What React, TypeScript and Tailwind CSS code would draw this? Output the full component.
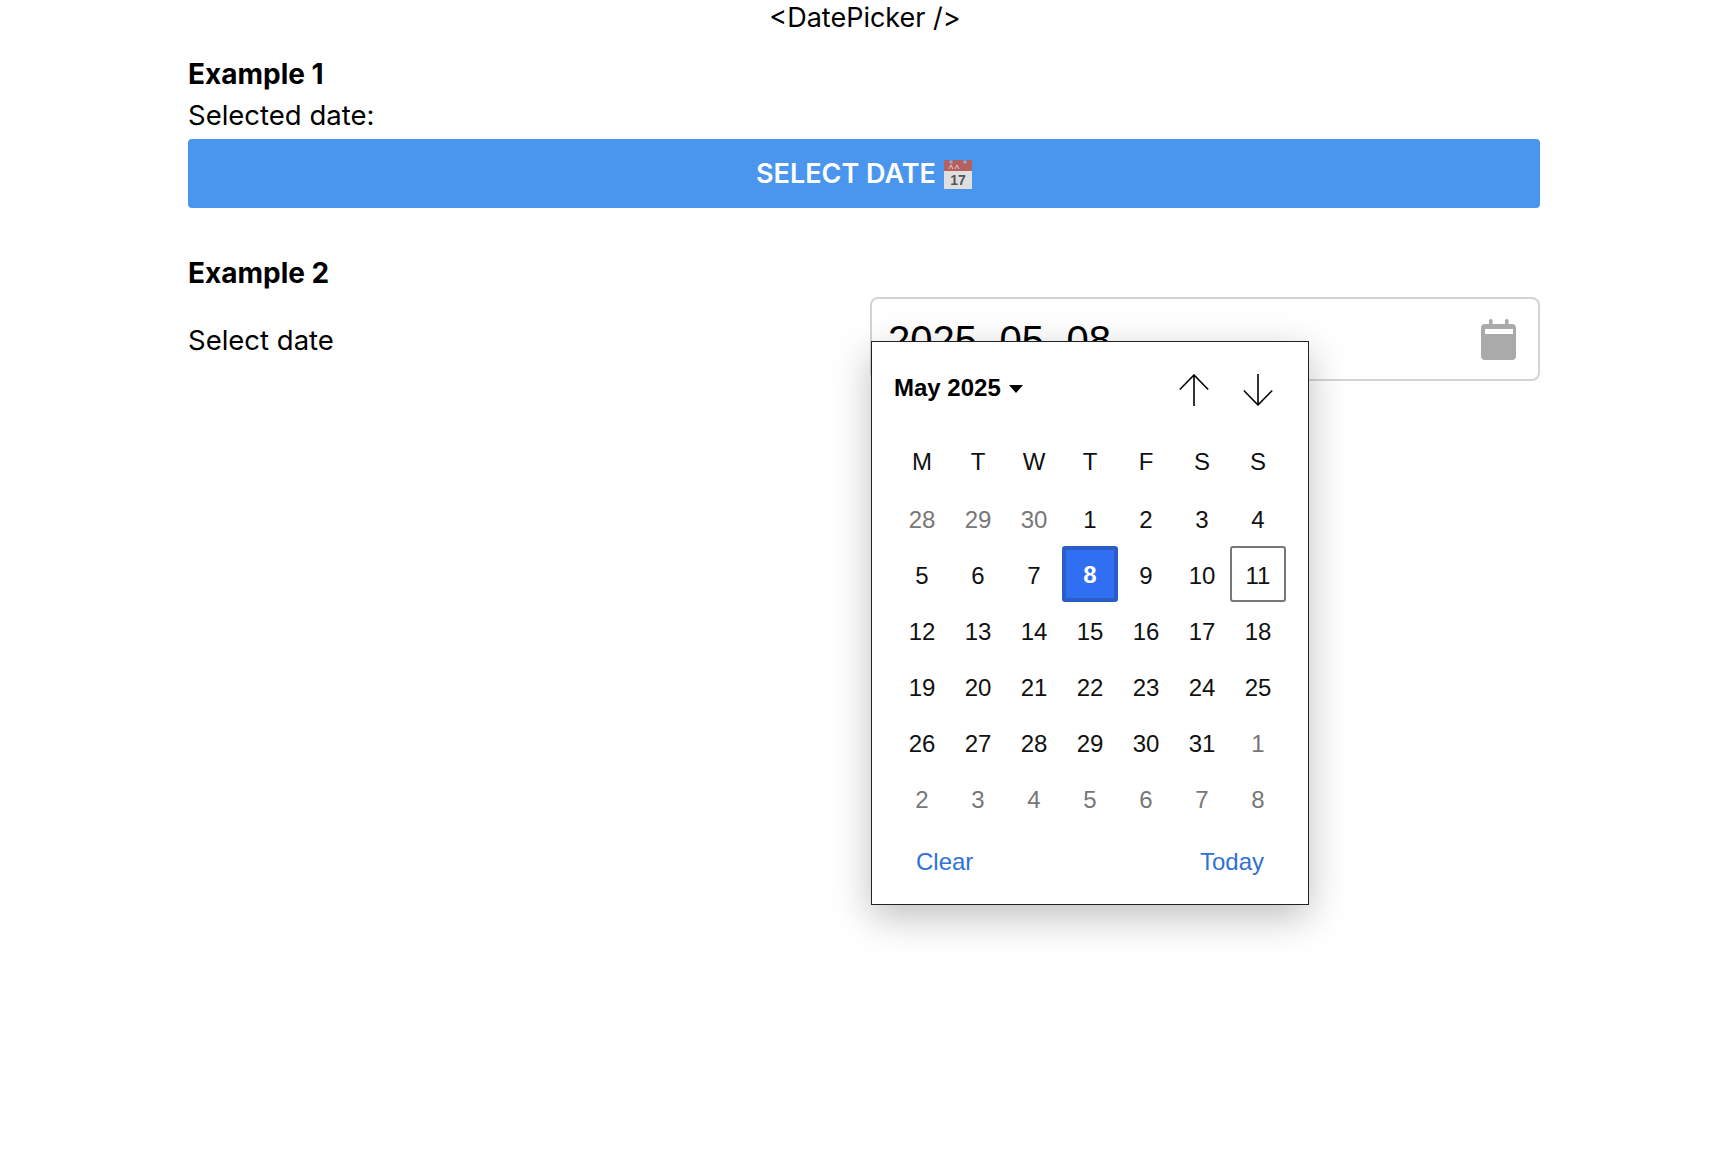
const weekdays = ["M", "T", "W", "T", "F", "S", "S"];

type Day = { label: number; muted?: boolean; selected?: boolean; today?: boolean };

const days: Day[] = [
  { label: 28, muted: true },
  { label: 29, muted: true },
  { label: 30, muted: true },
  ...Array.from({ length: 31 }, (_, i) => ({
    label: i + 1,
    selected: i + 1 === 8,
    today: i + 1 === 11,
  })),
  ...Array.from({ length: 8 }, (_, i) => ({ label: i + 1, muted: true })),
];

const CalendarEmoji = () => (
  <svg width="28" height="29" viewBox="0 0 28 29" className="inline-block ml-[8px] -mt-[2px] align-middle">
    <rect width="28" height="29" fill="#dfdfdf" />
    <rect width="28" height="11" fill="#b4605e" />
    <circle cx="7" cy="2" r="1.8" fill="#7fb2e8" />
    <circle cx="21" cy="2" r="1.8" fill="#7fb2e8" />
    <path d="M5 9l2-4 2 4M11 9l2-4 2 4" stroke="#e9c8c6" strokeWidth="1" fill="none" />
    <text x="14" y="25" textAnchor="middle" fontSize="14" fill="#555" fontFamily="Liberation Sans, sans-serif">
      17
    </text>
  </svg>
);

const CalendarIcon = () => (
  <svg width="35" height="41" viewBox="0 0 35 41" className="shrink-0">
    <rect x="8" y="0" width="3.5" height="8" rx="1.5" fill="#aaaaaa" />
    <rect x="24" y="0" width="3.5" height="8" rx="1.5" fill="#aaaaaa" />
    <path
      fillRule="evenodd"
      d="M4 5h27a4 4 0 0 1 4 4v28a4 4 0 0 1-4 4H4a4 4 0 0 1-4-4V9a4 4 0 0 1 4-4zM4 10v5h28v-5z"
      fill="#aaaaaa"
    />
  </svg>
);

const Arrow = ({ down }: { down?: boolean }) => (
  <svg width="30" height="32" viewBox="0 0 30 32" fill="none" stroke="#000" strokeWidth="1.6">
    <path d={down ? "M15 0v31M0.8 16.5 15 31 29.2 16.5" : "M15 32V1M0.8 15.5 15 1 29.2 15.5"} />
  </svg>
);

const Popup = () => (
  <div className="absolute top-[42px] -left-px w-[438px] h-[564px] bg-white border border-[#222] shadow-[0_12px_36px_rgba(0,0,0,0.25)] px-[22px] font-['Liberation_Sans',sans-serif] text-[24px] text-[#111]">
    <div className="flex items-center justify-between h-[92px]">
      <div className="flex items-center font-bold text-black">
        May 2025
        <span className="ml-2 mt-[1px] w-0 h-0 border-x-[7px] border-x-transparent border-t-[8px] border-t-black" />
      </div>
      <div className="flex items-center gap-[34px] mr-[13px] mt-[3px]">
        <Arrow />
        <Arrow down />
      </div>
    </div>
    <div className="grid grid-cols-[repeat(7,56px)] auto-rows-[56px]">
      {weekdays.map((d, i) => (
        <div key={i} className="flex items-center justify-center">
          {d}
        </div>
      ))}
      {days.map((d, i) => (
        <div
          key={i}
          className={
            d.selected
              ? "flex items-center justify-center pt-[2px] rounded-[3px] bg-[#306ff2] border-4 border-[#2a5ec6] text-white font-bold"
              : d.today
                ? "flex items-center justify-center pt-[3px] rounded-[3px] border-2 border-[#777]"
                : d.muted
                  ? "flex items-center justify-center pt-[3px] text-[#777]"
                  : "flex items-center justify-center pt-[3px]"
          }
        >
          {d.label}
        </div>
      ))}
    </div>
    <div className="flex items-center justify-between px-[22px] h-[72px] text-[#2f72d3]">
      <span>Clear</span>
      <span>Today</span>
    </div>
  </div>
);

export default function App() {
  return (
    <div className="min-h-[1176px] bg-white text-black font-['Inter',sans-serif] text-[27.5px]">
      <h1 className="text-center text-[27px] leading-[36px] font-normal">&lt;DatePicker /&gt;</h1>
      <div className="w-[1352px] ml-[188px]">
        <h2 className="mt-[18px] text-[28px] font-bold leading-[40px]">Example 1</h2>
        <p className="leading-[43px] mb-[2px]">Selected date:</p>
        <button className="w-full h-[69px] pt-[1px] rounded-[4px] bg-[#4a96ee] text-white text-[27px] font-semibold">
          SELECT DATE
          <CalendarEmoji />
        </button>
        <h2 className="mt-[45px] text-[28px] font-bold leading-[41px]">Example 2</h2>
        <div className="flex items-center justify-between mt-[3px]">
          <label className="mt-[4px]">Select date</label>
          <div className="relative w-[670px] h-[84px] flex items-center justify-between pl-[16px] pr-[22px] border-2 border-[#d4d4d4] rounded-[8px]">
            <span className="mt-[2px] font-['Liberation_Sans',sans-serif] text-[40px]">
              2025<span className="mx-[4.6px]">-</span>05<span className="mx-[4.6px]">-</span>08
            </span>
            <CalendarIcon />
            <Popup />
          </div>
        </div>
      </div>
    </div>
  );
}
